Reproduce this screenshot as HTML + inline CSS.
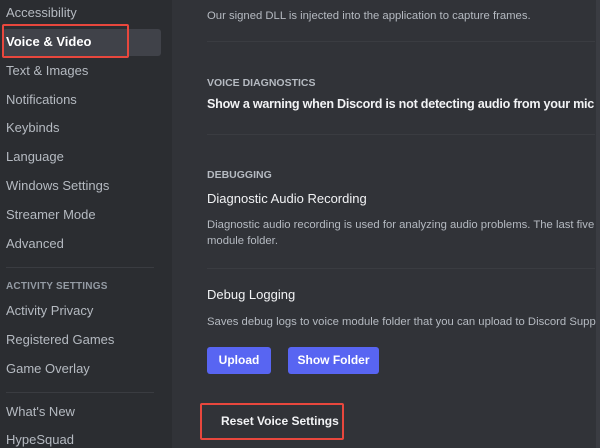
<!DOCTYPE html>
<html><head><style>
*{margin:0;padding:0;box-sizing:border-box}
body{width:600px;height:448px;overflow:hidden;background:#313338;font-family:"Liberation Sans",sans-serif;position:relative}
.sb{position:absolute;left:0;top:0;width:172px;height:448px;background:#2b2d31}
.it{position:absolute;left:6px;font-size:13px;color:#b5bac1;line-height:16px}
.sel{position:absolute;left:3px;top:29px;width:158px;height:27px;background:#404249;border-radius:3px}
.hd{position:absolute;left:6px;font-size:10px;font-weight:bold;color:#949ba4;letter-spacing:.2px}
.dv{position:absolute;height:1px;background:#3a3c41}
.main{position:absolute;left:0;top:0;width:596px;height:448px;overflow:hidden}
.m{position:absolute;left:207px;white-space:nowrap}
.s{font-size:11.3px;color:#b5bac1}
.h{font-size:10.5px;font-weight:bold;color:#b5bac1}
.t{font-size:13px;color:#f2f3f5}
.btn{position:absolute;top:347px;height:27px;background:#5865f2;color:#fff;font-size:12px;font-weight:bold;text-align:center;line-height:27px;border-radius:3px}
.red{position:absolute;border:2px solid #e8473d;border-radius:2px}
</style></head><body>
<div class="sb"></div>
<div class="sel"></div>
<div class="it" style="top:5px">Accessibility</div>
<div class="it" style="top:34px;color:#fff;font-weight:bold">Voice &amp; Video</div>
<div class="it" style="top:63px">Text &amp; Images</div>
<div class="it" style="top:92px">Notifications</div>
<div class="it" style="top:120px">Keybinds</div>
<div class="it" style="top:149px">Language</div>
<div class="it" style="top:178px">Windows Settings</div>
<div class="it" style="top:207px">Streamer Mode</div>
<div class="it" style="top:236px">Advanced</div>
<div class="dv" style="left:6px;width:148px;top:267px"></div>
<div class="hd" style="top:281px">ACTIVITY SETTINGS</div>
<div class="it" style="top:303px">Activity Privacy</div>
<div class="it" style="top:332px">Registered Games</div>
<div class="it" style="top:361px">Game Overlay</div>
<div class="dv" style="left:6px;width:148px;top:392px"></div>
<div class="it" style="top:404px">What's New</div>
<div class="it" style="top:432px">HypeSquad</div>
<div class="red" style="left:2px;top:24px;width:127px;height:34px"></div>

<div style="position:absolute;left:596px;top:0;width:4px;height:448px;background:#3a3c42"></div>
<div class="main">
<div class="m s" style="top:10px">Our signed DLL is injected into the application to capture frames.</div>
<div class="dv" style="left:207px;width:388px;top:41px"></div>
<div class="m h" style="top:77px">VOICE DIAGNOSTICS</div>
<div class="m t" style="top:97px;font-size:12.6px;font-weight:bold;letter-spacing:-0.25px">Show a warning when Discord is not detecting audio from your mic</div>
<div class="dv" style="left:207px;width:388px;top:134px"></div>
<div class="m h" style="top:169px">DEBUGGING</div>
<div class="m t" style="top:191px">Diagnostic Audio Recording</div>
<div class="m s" style="top:219px">Diagnostic audio recording is used for analyzing audio problems. The last five</div>
<div class="m s" style="top:235px">module folder.</div>
<div class="dv" style="left:207px;width:388px;top:268px"></div>
<div class="m t" style="top:287px">Debug Logging</div>
<div class="m s" style="top:316px">Saves debug logs to voice module folder that you can upload to Discord Supp</div>
<div class="btn" style="left:207px;width:64px">Upload</div>
<div class="btn" style="left:288px;width:91px">Show Folder</div>
<div class="m" style="left:221px;top:414px;font-size:12px;font-weight:bold;color:#f2f3f5">Reset Voice Settings</div>
<div class="red" style="left:200px;top:403px;width:144px;height:37px"></div>
</div>
</body></html>
